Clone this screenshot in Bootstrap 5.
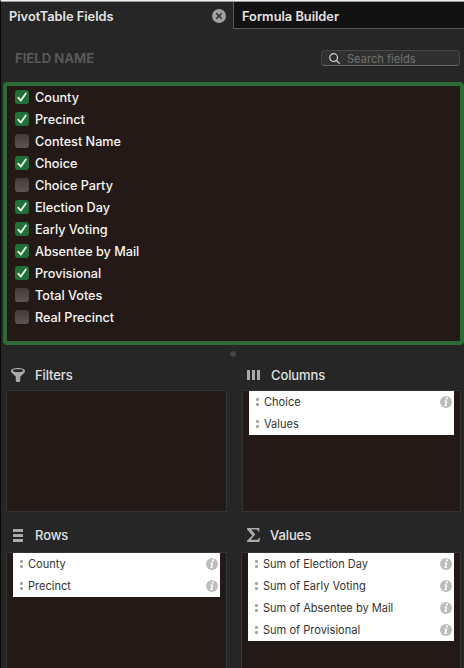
<!DOCTYPE html>
<html lang="en">
<head>
<meta charset="utf-8">
<meta name="viewport" content="width=device-width, initial-scale=1">
<title>PivotTable Fields</title>
<link href="https://cdn.jsdelivr.net/npm/bootstrap@5.3.0/dist/css/bootstrap.min.css" rel="stylesheet">
<style>
body{font-family:Inter,"Liberation Sans",sans-serif;font-size:13px;line-height:22px;background:#262626;color:#e4e4e4;width:464px;height:668px;overflow:hidden}
.pane{height:668px;border-top:1px solid #f0f3f2;border-left:1px solid #090909}
.tabs{height:28px;border-top:1px solid #989c9b}
.tab{font-weight:600;font-size:12.8px;line-height:29px}
.tab-active{width:232px;padding:0 7px 0 8px}
.tab-active span{padding-top:2px}
.tab-rest{background:#121212;border-left:1px solid #595959;border-bottom:1px solid #595959;padding-left:8px}
.fields-head{height:53px;padding:5px 4px 0 14px}
.fields-head h2{font-size:13.1px;font-weight:700;color:#585858;padding-top:2px}
.search{width:139px;height:16px;border:1px solid #484848;border-bottom-color:#666;border-radius:4px;background:#303030;padding-left:7px;gap:7px}
.search input{width:100px;padding:1px 0 0;border:0;background:none;color:#ddd;font-size:11.1px;outline:0;line-height:14px;height:15px}
.search input::placeholder{color:#707070;opacity:1}
.field-list{margin-left:2px;height:263px;border:4px solid #2e6b36;border-radius:4px;background:#231a17;padding-left:8px}
.field{height:22px;gap:6px;color:#f7f5f4;font-weight:500;font-size:12.65px}
.field span{padding-top:2px}
.tick{appearance:none;flex:none;width:14px;height:14px;margin:0;border-radius:3px;background:linear-gradient(#403b39,#5c5755)}
.tick:checked{background:#217038 url("data:image/svg+xml,%3Csvg xmlns='http://www.w3.org/2000/svg' viewBox='0 0 14 14'%3E%3Cpath d='M3.2 7.6 5.9 10.6 10.8 3.4' fill='none' stroke='%23f1faf2' stroke-width='1.8' stroke-linecap='round' stroke-linejoin='round'/%3E%3C/svg%3E") center/14px}
.grip{height:19px;padding-top:6px}
.grip i{width:6px;height:6px;background:#444}
.zones{display:grid;grid-template-columns:221px 220px;column-gap:14px;padding-left:5px}
.zone-title{height:26px;font-size:13px;letter-spacing:-.1px;font-weight:500;color:#e0e0e0;line-height:22px}
.zone-title svg{margin-left:5px;margin-right:10px;width:14px;height:14px;fill:#aaa}
.right{margin-left:1px}
.right.wide{margin-left:0}
.right.wide .zone-title svg{margin-left:6px;margin-right:9px}
.well{border:1px solid #353333;background:#231a17;padding:0 6px;height:122px}
.upper{height:160px}
.lower .zone-title{height:28px}
.lower .well{height:130px}
.chips{background:#fff;color:#333}
.chip{height:22px;font-size:11.05px;padding:0 2px 0 7px}
.chip .dots{width:3px;height:8px;margin-right:5px;fill:#a5a5a5;flex:none}
.chip .info{width:12px;height:12px}
</style>
<script src="https://cdn.jsdelivr.net/npm/bootstrap@5.3.0/dist/js/bootstrap.bundle.min.js"></script>
</head>
<body>
<svg class="d-none">
<symbol id="dots" viewBox="0 0 3 8"><rect width="3" height="3" rx="1"/><rect y="5" width="3" height="3" rx="1"/></symbol>
<symbol id="info" viewBox="0 0 12 12"><circle cx="6" cy="6" r="6" fill="#bdbdbd"/><circle cx="6.900" cy="2.400" r="1.100" fill="#fff"/><path d="M4.300 4.400h3L6.200 9h.9l-.3.900H4.400l1-4.600H4.100Z" fill="#fff"/></symbol>
</svg>
<main class="pane">
<nav class="tabs d-flex">
<div class="tab tab-active d-flex align-items-center justify-content-between"><span>PivotTable Fields</span>
<svg width="14" height="14" viewBox="0 0 14 14"><circle cx="7" cy="7" r="7" fill="#a0a0a0"/><path d="m4.300 4.300 5.400 5.400m0-5.400-5.400 5.400" stroke="#262626" stroke-width="1.300"/></svg></div>
<div class="tab tab-rest flex-fill">Formula Builder</div>
</nav>
<header class="fields-head d-flex align-items-center justify-content-between">
<h2 class="m-0">FIELD NAME</h2>
<label class="search d-flex align-items-center"><svg width="11" height="11" viewBox="0 0 11 11" fill="none" stroke="#d6d6d6" stroke-width="1.2" stroke-linecap="round"><circle cx="4.6" cy="4.6" r="3.9"/><path d="m7.5 7.5 2.9 2.9"/></svg><input type="text" placeholder="Search fields"></label>
</header>
<section class="field-list">
<label class="field d-flex align-items-center"><input class="tick" type="checkbox" checked><span>County</span></label>
<label class="field d-flex align-items-center"><input class="tick" type="checkbox" checked><span>Precinct</span></label>
<label class="field d-flex align-items-center"><input class="tick" type="checkbox"><span>Contest Name</span></label>
<label class="field d-flex align-items-center"><input class="tick" type="checkbox" checked><span>Choice</span></label>
<label class="field d-flex align-items-center"><input class="tick" type="checkbox"><span>Choice Party</span></label>
<label class="field d-flex align-items-center"><input class="tick" type="checkbox" checked><span>Election Day</span></label>
<label class="field d-flex align-items-center"><input class="tick" type="checkbox" checked><span>Early Voting</span></label>
<label class="field d-flex align-items-center"><input class="tick" type="checkbox" checked><span>Absentee by Mail</span></label>
<label class="field d-flex align-items-center"><input class="tick" type="checkbox" checked><span>Provisional</span></label>
<label class="field d-flex align-items-center"><input class="tick" type="checkbox"><span>Total Votes</span></label>
<label class="field d-flex align-items-center"><input class="tick" type="checkbox"><span>Real Precinct</span></label>
</section>
<div class="grip d-flex justify-content-center"><i class="rounded-circle"></i></div>
<div class="zones">
<section class="upper">
<div class="zone-title d-flex"><svg class="mt-1" viewBox="0 0 14 14"><path fill-rule="evenodd" d="M0 3C0 1.100 3 0 7 0s7 1.100 7 3c0 1.200-.7 1.800-1.500 2.500L9.200 8.800V13l-.8 1H5.600l-.8-1V8.800L1.500 5.500C.7 4.800 0 4.200 0 3ZM1.800 2.700c0 .9 2.200 1.400 5.200 1.400s5.200-.5 5.200-1.400S9.900 1.300 7 1.300s-5.200.5-5.200 1.400Z"/></svg><span>Filters</span></div>
<div class="well"></div>
</section>
<section class="upper right">
<div class="zone-title d-flex"><svg class="mt-1" viewBox="0 0 14 14"><path d="M0 2h3v10H0zM5 2h3v10H5zM10 2h3v10h-3z"/></svg><span>Columns</span></div>
<div class="well"><div class="chips">
<div class="chip d-flex align-items-center"><svg class="dots"><use href="#dots"/></svg><span>Choice</span><svg class="info ms-auto"><use href="#info"/></svg></div>
<div class="chip d-flex align-items-center"><svg class="dots"><use href="#dots"/></svg><span>Values</span></div>
</div></div>
</section>
<section class="lower">
<div class="zone-title d-flex"><svg class="mt-1" viewBox="0 0 14 14"><path d="M2 1h10v3H2zM2 6h10v3H2zM2 11h10v3H2z"/></svg><span>Rows</span></div>
<div class="well"><div class="chips">
<div class="chip d-flex align-items-center"><svg class="dots"><use href="#dots"/></svg><span>County</span><svg class="info ms-auto"><use href="#info"/></svg></div>
<div class="chip d-flex align-items-center"><svg class="dots"><use href="#dots"/></svg><span>Precinct</span><svg class="info ms-auto"><use href="#info"/></svg></div>
</div></div>
</section>
<section class="lower right wide">
<div class="zone-title d-flex"><svg class="mt-1" viewBox="0 0 14 14"><path d="M0 0h12.300v3.500h-1.100C10.800 2 10.200 1.500 8.500 1.500H4.300l4 5-4.600 5.300h5.500c1.700 0 2.300-.7 2.700-2.100H13l-.6 4.300H0v-1.200L5.200 7.400 0 1.200Z"/></svg><span>Values</span></div>
<div class="well"><div class="chips">
<div class="chip d-flex align-items-center"><svg class="dots"><use href="#dots"/></svg><span>Sum of Election Day</span><svg class="info ms-auto"><use href="#info"/></svg></div>
<div class="chip d-flex align-items-center"><svg class="dots"><use href="#dots"/></svg><span>Sum of Early Voting</span><svg class="info ms-auto"><use href="#info"/></svg></div>
<div class="chip d-flex align-items-center"><svg class="dots"><use href="#dots"/></svg><span>Sum of Absentee by Mail</span><svg class="info ms-auto"><use href="#info"/></svg></div>
<div class="chip d-flex align-items-center"><svg class="dots"><use href="#dots"/></svg><span>Sum of Provisional</span><svg class="info ms-auto"><use href="#info"/></svg></div>
</div></div>
</section>
</div>
</main>
</body>
</html>
